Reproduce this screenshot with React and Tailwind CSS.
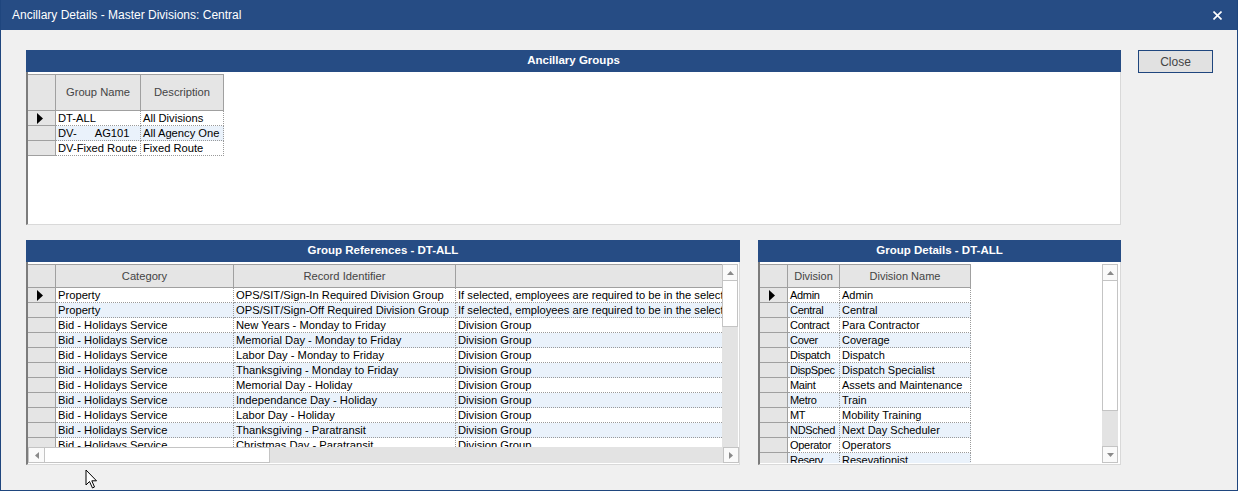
import React from 'react';

const font = { fontFamily: '"Liberation Sans", Arial, sans-serif' };

const groups = [
  ['DT-ALL', 'All Divisions'],
  ['DV-      AG101', 'All Agency One'],
  ['DV-Fixed Route', 'Fixed Route'],
];

const sel = 'If selected, employees are required to be in the selected division group';
const refs = [
  ['Property', 'OPS/SIT/Sign-In Required Division Group', sel],
  ['Property', 'OPS/SIT/Sign-Off Required Division Group', sel],
  ['Bid - Holidays Service', 'New Years - Monday to Friday', 'Division Group'],
  ['Bid - Holidays Service', 'Memorial Day - Monday to Friday', 'Division Group'],
  ['Bid - Holidays Service', 'Labor Day - Monday to Friday', 'Division Group'],
  ['Bid - Holidays Service', 'Thanksgiving - Monday to Friday', 'Division Group'],
  ['Bid - Holidays Service', 'Memorial Day - Holiday', 'Division Group'],
  ['Bid - Holidays Service', 'Independance Day - Holiday', 'Division Group'],
  ['Bid - Holidays Service', 'Labor Day - Holiday', 'Division Group'],
  ['Bid - Holidays Service', 'Thanksgiving - Paratransit', 'Division Group'],
  ['Bid - Holidays Service', 'Christmas Day - Paratransit', 'Division Group'],
];

const details = [
  ['Admin', 'Admin'],
  ['Central', 'Central'],
  ['Contract', 'Para Contractor'],
  ['Cover', 'Coverage'],
  ['Dispatch', 'Dispatch'],
  ['DispSpec', 'Dispatch Specialist'],
  ['Maint', 'Assets and Maintenance'],
  ['Metro', 'Train'],
  ['MT', 'Mobility Training'],
  ['NDSched', 'Next Day Scheduler'],
  ['Operator', 'Operators'],
  ['Reserv', 'Resevationist'],
];

function RowMark() {
  return (
    <svg width="7" height="11" viewBox="0 0 7 11" className="ml-[9px]">
      <path d="M0 0 L6 5.5 L0 11 Z" fill="#000" />
    </svg>
  );
}

function DataGrid({ headH, cols, rows, size = 'text-[11.2px]' }) {
  return (
    <div className={`inline-flex flex-col border-t border-[#a0a0a0] ${size}`}>
      <div className="flex" style={{ height: headH }}>
        <div className="w-[28px] shrink-0 bg-[#e5e5e5] border-r border-b border-[#a0a0a0]" />
        {cols.map((c) => (
          <div
            key={c.label + c.w}
            className="shrink-0 bg-[#e5e5e5] border-r border-b border-[#a0a0a0] flex items-center justify-center text-[#444]"
            style={{ width: c.w }}
          >
            {c.label}
          </div>
        ))}
      </div>
      {rows.map((r, i) => (
        <div key={i} className="flex h-[15px]">
          <div className="w-[28px] shrink-0 bg-[#e5e5e5] border-r border-b border-[#a0a0a0] flex items-center">
            {i === 0 && <RowMark />}
          </div>
          {r.map((v, j) => (
            <div
              key={j}
              className={`shrink-0 border-r border-b border-dotted border-[#9a9a9a] pl-[2px] leading-[14px] whitespace-pre overflow-hidden text-black ${
                i % 2 === 1 ? 'bg-[#eaf2fb]' : 'bg-white'
              } ${cols[j].tight ? 'tracking-[-0.3px]' : ''}`}
              style={{ width: cols[j].w }}
            >
              {v}
            </div>
          ))}
        </div>
      ))}
    </div>
  );
}

function Arrow({ dir }) {
  const d = {
    up: 'M0 4 L3.5 0 L7 4 Z',
    down: 'M0 0 L3.5 4 L7 0 Z',
    left: 'M4 0 L0 3.5 L4 7 Z',
    right: 'M0 0 L4 3.5 L0 7 Z',
  }[dir];
  const v = dir === 'up' || dir === 'down';
  return (
    <svg width={v ? 7 : 4} height={v ? 4 : 7} viewBox={v ? '0 0 7 4' : '0 0 4 7'}>
      <path d={d} fill="#8a8a8a" />
    </svg>
  );
}

function ScrollBtn({ dir, className }) {
  return (
    <div className={`bg-[#fafafa] border border-[#c4c4c4] flex items-center justify-center ${className}`}>
      <Arrow dir={dir} />
    </div>
  );
}

function PanelHead({ title }) {
  return (
    <div className="h-[22px] bg-[#264c84] text-white font-bold text-[11.5px] flex items-center justify-center">
      {title}
    </div>
  );
}

export default function App() {
  return (
    <div className="bg-white w-[1240px] h-[492px]" style={font}>
      <div className="relative w-[1238px] h-[491px] border-l border-r border-b border-[#1f467e] bg-[#f0f0f0] flex flex-col">
        <div className="h-[30px] shrink-0 bg-[#264c84] flex items-center justify-between pl-[11px] pr-[15px] text-white text-[12px]">
          <span>Ancillary Details - Master Divisions: Central</span>
          <svg width="9" height="9" viewBox="0 0 9 9">
            <path d="M0.5 0.5 L8.5 8.5 M8.5 0.5 L0.5 8.5" stroke="#fff" strokeWidth="1.6" />
          </svg>
        </div>

        <div className="flex pl-[25px] pt-[20px] gap-[17px]">
          <div className="w-[1095px] flex flex-col gap-[15px]">
            <div className="flex flex-col">
              <PanelHead title="Ancillary Groups" />
              <div className="h-[153px] bg-white border-l-2 border-[#7c7c7c] border-b border-b-[#d9d9d9] border-r border-r-[#d9d9d9] pt-[2px]">
                <DataGrid
                  headH={36}
                  cols={[
                    { label: 'Group Name', w: 85 },
                    { label: 'Description', w: 83 },
                  ]}
                  rows={groups}
                />
              </div>
            </div>

            <div className="flex gap-[18px]">
              <div className="w-[714px] flex flex-col">
                <PanelHead title="Group References - DT-ALL" />
                <div className="h-[203px] bg-white border-l-2 border-[#7c7c7c] border-b border-b-[#d9d9d9] border-r border-r-[#d9d9d9] pt-[2px] pb-[1px] flex flex-col">
                  <div className="flex h-[183px]">
                    <div className="w-[694px] overflow-hidden">
                      <DataGrid
                        headH={23}
                        cols={[
                          { label: 'Category', w: 178 },
                          { label: 'Record Identifier', w: 222 },
                          { label: '', w: 300 },
                        ]}
                        rows={refs}
                      />
                    </div>
                    <div className="w-[16px] flex flex-col bg-[#e3e3e3]">
                      <ScrollBtn dir="up" className="h-[17px]" />
                      <div className="h-[46px] bg-white border border-t-0 border-[#c4c4c4]" />
                    </div>
                  </div>
                  <div className="h-[16px] flex bg-[#e3e3e3]">
                    <ScrollBtn dir="left" className="w-[17px]" />
                    <div className="w-[225px] bg-white border border-l-0 border-[#c4c4c4]" />
                    <div className="flex-1" />
                    <ScrollBtn dir="right" className="w-[16px]" />
                  </div>
                </div>
              </div>

              <div className="w-[363px] flex flex-col">
                <PanelHead title="Group Details - DT-ALL" />
                <div className="h-[203px] bg-white border-l-2 border-[#7c7c7c] border-b border-b-[#d9d9d9] border-r border-r-[#d9d9d9] pt-[2px] pb-[1px] pr-[2px] flex">
                  <div className="w-[342px] overflow-hidden">
                    <DataGrid
                      headH={23}
                      size="text-[11px]"
                      cols={[
                        { label: 'Division', w: 52, tight: true },
                        { label: 'Division Name', w: 131 },
                      ]}
                      rows={details}
                    />
                  </div>
                  <div className="w-[16px] flex flex-col bg-[#e3e3e3]">
                    <ScrollBtn dir="up" className="h-[17px]" />
                    <div className="h-[130px] bg-white border border-t-0 border-[#c4c4c4]" />
                    <div className="flex-1" />
                    <ScrollBtn dir="down" className="h-[17px]" />
                  </div>
                </div>
              </div>
            </div>
          </div>

          <div>
            <button className="block w-[75px] h-[23px] bg-[#e1e1e1] border border-[#1f467e] text-[12px] text-[#444]">
              Close
            </button>
          </div>
        </div>

        <svg
          width="14"
          height="21"
          viewBox="0 0 14 21"
          className="absolute left-[84px] top-[469px]"
        >
          <path
            d="M1 1 L1 16 L4.5 12.5 L7.5 19 L9.5 18 L6.8 11.8 L11.5 11.8 Z"
            fill="#fff"
            stroke="#000"
            strokeWidth="1"
            strokeLinejoin="round"
          />
        </svg>
      </div>
    </div>
  );
}
